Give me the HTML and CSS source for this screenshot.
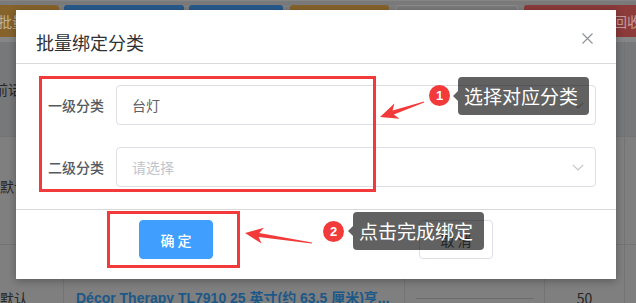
FILE: index.html
```html
<!DOCTYPE html>
<html lang="zh-CN">
<head>
<meta charset="utf-8">
<title>批量绑定分类</title>
<link rel="stylesheet" href="styles.css">
</head>
<body>
<div class="page">
  <div class="topline"></div>
  <div class="toolbar">
    <span class="tbtn orange b1">批量绑定</span>
    <span class="tbtn blue b2">批量导出</span>
    <span class="tbtn blue b3">批量导入</span>
    <span class="tbtn orange b4">批量修改</span>
    <span class="tbtn gray b5">刷新</span>
    <span class="tbtn red b6">移入回收站</span>
  </div>
  <div class="strip"></div>
  <div class="table">
    <div class="cell head c1"><span class="cut">当前话术</span></div>
    <div class="cell head"></div>
    <div class="cell head"></div>
    <div class="cell head"></div>
    <div class="cell head last"></div>

    <div class="cell c1 r1"><span>默认</span></div>
    <div class="cell r1"></div>
    <div class="cell r1"></div>
    <div class="cell r1"></div>
    <div class="cell r1 last"></div>

    <div class="cell c1 r2"><span>默认</span></div>
    <div class="cell r2 title"><span>Décor Therapy TL7910 25 英寸(约 63.5 厘米)亨...</span></div>
    <div class="cell r2 price-col"><span class="price">¥219.99</span><span class="rule"></span></div>
    <div class="cell r2 qty"><span>50</span></div>
    <div class="cell r2 last"></div>
  </div>
</div>

<div class="dialog">
  <div class="dlg-head">
    <span class="dlg-title">批量绑定分类</span>
    <svg class="close" width="11" height="11" viewBox="0 0 11 11"><path d="M0.5 0.5 L10.5 10.5 M10.5 0.5 L0.5 10.5" stroke="#909399" stroke-width="1.2" fill="none"/></svg>
  </div>
  <div class="dlg-body">
    <div class="form-row">
      <label class="form-label">一级分类</label>
      <div class="select">
        <span class="value">台灯</span>
        <svg class="chev" width="12" height="7" viewBox="0 0 12 7"><polyline points="0.8,0.8 6,6 11.2,0.8" stroke="#c0c4cc" stroke-width="1.2" fill="none"/></svg>
      </div>
    </div>
    <div class="form-row">
      <label class="form-label">二级分类</label>
      <div class="select">
        <span class="placeholder">请选择</span>
        <svg class="chev" width="12" height="7" viewBox="0 0 12 7"><polyline points="0.8,0.8 6,6 11.2,0.8" stroke="#c0c4cc" stroke-width="1.2" fill="none"/></svg>
      </div>
    </div>
  </div>
  <div class="dlg-foot">
    <button class="btn primary">确 定</button>
    <button class="btn plain">取 消</button>
  </div>
</div>

<div class="mark mark1"></div>
<div class="mark mark2"></div>

<svg class="arrows" width="636" height="303" viewBox="0 0 636 303">
  <polygon fill="#f23a3a" points="380,117 394.4,103.6 392.6,110.6 424,101.4 424.2,102.6 393.8,114.4 399.6,118.8"/>
  <polygon fill="#f23a3a" points="245,233 264,227.8 259.2,233.1 312,242.4 311.8,243.6 258.6,237.1 261.6,243.6"/>
</svg>

<span class="badge badge1">1</span>
<div class="tip tip1">选择对应分类</div>
<span class="badge badge2">2</span>
<div class="tip tip2">点击完成绑定</div>
</body>
</html>
```

FILE: styles.css
```css
* {
  box-sizing: border-box;
  margin: 0;
  padding: 0;
}

html, body {
  width: 636px;
  height: 303px;
}

body {
  position: relative;
  overflow: hidden;
  background: #7f7f7f;
  font-family: "Liberation Sans", "Noto Sans CJK SC", sans-serif;
  font-size: 14px;
}

/* ---------- dimmed page behind the dialog ---------- */
.page {
  width: 636px;
  height: 303px;
  overflow: hidden;
}

.topline {
  height: 5px;
  background: #7a7a7a;
  border-top: 1px solid #858585;
}

.toolbar {
  display: flex;
  height: 32px;
  margin-left: -12px;
  white-space: nowrap;
  overflow: hidden;
}

.tbtn {
  flex: none;
  height: 32px;
  line-height: 32px;
  border-radius: 3px;
  color: rgba(255, 255, 255, 0.5);
  font-family: "Noto Sans CJK SC", sans-serif;
  font-size: 14px;
  overflow: hidden;
}

.orange { background: #86632b; }
.blue { background: #275a8c; }
.gray { background: #7b7b7b; border: 1px solid #8c8c8c; }
.red { background: #8c3a3a; }

.b1 { width: 71px; padding-left: 10px; }
.b2 { width: 120px; margin-left: 5px; }
.b3 { width: 94px; margin-left: 5px; }
.b4 { width: 99px; margin-left: 7px; }
.b5 { width: 122px; margin-left: 7px; }
.b6 { width: 130px; margin-left: 6px; padding-left: 61px; }

.strip {
  height: 5px;
  background: #868686;
}

.table {
  display: grid;
  grid-template-columns: 64px 341px 140px 80px 11px;
  grid-template-rows: 95px 108px 58px;
}

.cell {
  display: flex;
  align-items: center;
  border-right: 1px solid #747474;
  border-bottom: 1px solid #747474;
  color: #262626;
  font-family: "Noto Sans CJK SC", sans-serif;
  font-size: 14px;
  overflow: hidden;
  white-space: nowrap;
}

.cell.last { border-right: none; }

.head {
  background: #77787a;
}

.cut {
  margin-left: -20px;
}

.r1 span { margin-top: -10px; }

.r2 {
  align-items: flex-start;
  padding-top: 43px;
  border-bottom: none;
  line-height: 20px;
}

.title span {
  padding-left: 12px;
  color: #1c5888;
  font-family: "Liberation Sans", "Noto Sans CJK SC", sans-serif;
  font-weight: 700;
  font-size: 14px;
}

.price-col {
  flex-direction: column;
  align-items: center;
  padding-top: 18px;
}

.price {
  line-height: 20px;
  font-weight: 700;
  color: #222;
}

.rule {
  display: block;
  width: 118px;
  height: 1px;
  margin-top: 15px;
  background: #6c6c6c;
}

.qty {
  justify-content: center;
}

/* ---------- dialog ---------- */
.dialog {
  position: absolute;
  left: 16px;
  top: 10px;
  width: 600px;
  background: #fff;
  box-shadow: 0 2px 8px rgba(0, 0, 0, 0.3);
}

.dlg-head {
  display: flex;
  justify-content: space-between;
  align-items: flex-start;
  height: 54px;
  padding: 20px 23px 0 20px;
  border-bottom: 1px solid #d9d9d9;
}

.dlg-title {
  font-family: "Noto Sans CJK SC", sans-serif;
  font-size: 18px;
  line-height: 24px;
  color: #303133;
}

.close {
  margin-top: 3px;
}

.dlg-body {
  padding: 21px 20px 0 32px;
}

.form-row {
  display: flex;
  align-items: center;
  height: 40px;
  margin-bottom: 22px;
}

.form-label {
  width: 68px;
  padding-right: 12px;
  text-align: right;
  font-family: "Noto Sans CJK SC", sans-serif;
  font-size: 14px;
  font-weight: 500;
  color: #555a61;
}

.select {
  flex: 1;
  display: flex;
  align-items: center;
  justify-content: space-between;
  height: 40px;
  padding: 0 11px 0 15px;
  border: 1px solid #dcdfe6;
  border-radius: 4px;
  font-family: "Noto Sans CJK SC", sans-serif;
  font-size: 14px;
}

.value { color: #606266; }
.placeholder { color: #c0c4cc; }

.dlg-foot {
  display: flex;
  justify-content: center;
  gap: 206px;
  padding: 10px 0 20px;
  border-top: 1px solid #d9d9d9;
}

.btn {
  width: 74px;
  height: 39px;
  border-radius: 4px;
  font-family: "Noto Sans CJK SC", sans-serif;
  font-size: 14px;
  cursor: pointer;
}

.primary {
  background: #409eff;
  border: 1px solid #409eff;
  color: #fff;
  font-weight: 500;
}

.plain {
  background: #fff;
  border: 1px solid #dcdfe6;
  color: #606266;
}

/* ---------- annotations (overlays) ---------- */
.mark {
  position: absolute;
  border: 3px solid #f23a3a;
}

.mark1 { left: 39px; top: 76px; width: 337px; height: 116px; }
.mark2 { left: 107px; top: 211px; width: 133px; height: 57px; }

.arrows {
  position: absolute;
  left: 0;
  top: 0;
  pointer-events: none;
}

.badge {
  position: absolute;
  width: 21px;
  height: 21px;
  border-radius: 50%;
  background: #f23a3a;
  color: #fff;
  font-family: "Liberation Sans", sans-serif;
  font-size: 13px;
  font-weight: 700;
  line-height: 21px;
  text-align: center;
}

.badge1 { left: 429px; top: 85px; }
.badge2 { left: 323px; top: 221px; }

.tip {
  position: absolute;
  width: 131px;
  height: 38px;
  padding-left: 6px;
  border-radius: 4px;
  background: rgba(0, 0, 0, 0.62);
  color: #fff;
  font-family: "Noto Sans CJK SC", sans-serif;
  font-size: 19px;
  line-height: 38px;
  white-space: nowrap;
}

.tip::before {
  content: "";
  position: absolute;
  left: -5px;
  top: 14px;
  border-style: solid;
  border-width: 5px 5px 5px 0;
  border-color: transparent rgba(0, 0, 0, 0.62) transparent transparent;
}

.tip1 { left: 458px; top: 77px; }
.tip2 { left: 353px; top: 212px; }
```
